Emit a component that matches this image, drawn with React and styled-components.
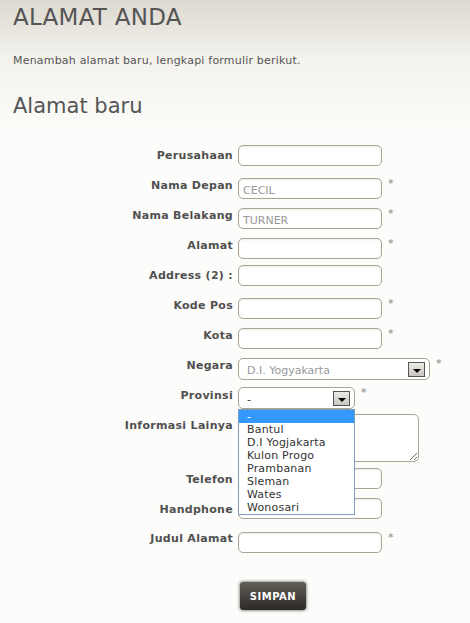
import React from 'react'
import styled, { createGlobalStyle } from 'styled-components'

const Global = createGlobalStyle`
  html, body { margin: 0; padding: 0; }
  body {
    background: #fcfcfa;
    font-family: "DejaVu Sans", Verdana, sans-serif;
    color: #555;
  }
`

const Page = styled.div`
  min-height: 623px;
  padding: 0 13px;
  background: linear-gradient(to bottom, #dcd9cf 0, #f3f2ed 60px, #fcfcfa 130px, #fcfcfa 100%);
  overflow: hidden;
`

const Title = styled.h1`
  margin: 3px 0 0;
  font-size: 23px;
  line-height: 28px;
  font-weight: normal;
  letter-spacing: 0.25px;
  color: #555;
`

const Intro = styled.p`
  margin: 23px 0 0;
  font-size: 11px;
  line-height: 14px;
  letter-spacing: 0.2px;
  color: #555;
`

const SubTitle = styled.h2`
  margin: 25px 0 0;
  font-size: 21px;
  line-height: 26px;
  font-weight: normal;
  color: #555;
`

const Form = styled.div`
  margin-top: 26px;
  display: grid;
  grid-template-columns: 220px 1fr;
  column-gap: 5px;
`

const Label = styled.label`
  grid-column: 1;
  text-align: right;
  font-size: 11px;
  line-height: 13px;
  font-weight: bold;
  letter-spacing: 0.3px;
  color: #505050;
  margin-top: ${p => p.$mt}px;
  padding-top: ${p => p.$lt}px;
`

const Field = styled.div`
  grid-column: 2;
  display: flex;
  align-items: flex-start;
  margin-top: ${p => p.$mt}px;
`

const Input = styled.input`
  box-sizing: border-box;
  width: 144px;
  height: 21px;
  margin: 0;
  padding: 3px 4px 0;
  border: 1px solid #aaa495;
  border-radius: 5px;
  background: #fff;
  box-shadow: inset 0 1px 2px rgba(0, 0, 0, 0.08);
  font-family: "DejaVu Sans", Verdana, sans-serif;
  font-size: 11px;
  color: #999;
  outline: none;
`

const TextArea = styled.textarea`
  box-sizing: border-box;
  width: 181px;
  height: 48px;
  margin: 0;
  padding: 3px 4px;
  border: 1px solid #aaa495;
  border-radius: 5px;
  background: #fff;
  font-family: "DejaVu Sans", Verdana, sans-serif;
  font-size: 11px;
  resize: both;
  outline: none;
`

const SelectBox = styled.div`
  position: relative;
  box-sizing: border-box;
  width: ${p => p.$w}px;
  height: 22px;
  border: 1px solid #aaa495;
  border-radius: 5px;
  background: #fff;
  display: flex;
  align-items: center;
  padding: 2px 0 0 8px;
  font-size: 11px;
  color: ${p => (p.$muted ? '#999' : '#333')};
`

const Arrow = styled.span`
  position: absolute;
  right: 4px;
  top: 3px;
  box-sizing: border-box;
  width: 17px;
  height: 15px;
  border: 1px solid #555;
  background: linear-gradient(#ecebe6, #c9c6bf);
  display: flex;
  align-items: center;
  justify-content: center;
  padding-top: 3px;

  &::after {
    content: '';
    border-left: 4px solid transparent;
    border-right: 4px solid transparent;
    border-top: 4px solid #000;
  }
`

const Star = styled.span`
  margin-left: 6px;
  font-size: 11px;
  line-height: 12px;
  color: #888;
`

const List = styled.ul`
  position: absolute;
  left: -1px;
  top: 21px;
  box-sizing: border-box;
  width: 117px;
  margin: 0;
  padding: 0;
  list-style: none;
  border: 1px solid #7f9db9;
  background: #fff;
  z-index: 2;
`

const Option = styled.li`
  height: 13px;
  line-height: 13px;
  padding-left: 8px;
  font-size: 11px;
  letter-spacing: 0.2px;
  color: ${p => (p.$active ? '#fff' : '#333')};
  background: ${p => (p.$active ? '#3399ff' : 'transparent')};
`

const Button = styled.button`
  grid-column: 2;
  justify-self: start;
  margin: 28px 0 0 1px;
  width: 68px;
  height: 30px;
  border: 1px solid #b8b6b2;
  border-radius: 4px;
  background: linear-gradient(#625e58, #2c2925);
  box-shadow: 0 0 3px rgba(0, 0, 0, 0.35);
  color: #fff;
  font-family: "DejaVu Sans", Verdana, sans-serif;
  font-size: 10px;
  font-weight: bold;
  letter-spacing: 0.5px;
`

const provinces = ['-', 'Bantul', 'D.I Yogjakarta', 'Kulon Progo', 'Prambanan', 'Sleman', 'Wates', 'Wonosari']

const rows = [
  { label: 'Perusahaan', mt: 0, lt: 4 },
  { label: 'Nama Depan', value: 'CECIL', req: true, mt: 12, lt: 1 },
  { label: 'Nama Belakang', value: 'TURNER', req: true, mt: 9, lt: 1 },
  { label: 'Alamat', req: true, mt: 9, lt: 1 },
  { label: 'Address (2) :', mt: 6, lt: 4 },
  { label: 'Kode Pos', req: true, mt: 12, lt: 1 },
  { label: 'Kota', req: true, mt: 9, lt: 1 },
  { label: 'Negara', type: 'select', w: 192, value: 'D.I. Yogyakarta', muted: true, req: true, mt: 9, lt: 1 },
  { label: 'Provinsi', type: 'select', w: 117, value: '-', open: true, req: true, mt: 7, lt: 2 },
  { label: 'Informasi Lainya', type: 'area', mt: 5, lt: 5 },
  { label: 'Telefon', mt: 6, lt: 5 },
  { label: 'Handphone', mt: 9, lt: 5 },
  { label: 'Judul Alamat', req: true, mt: 13, lt: 0 },
]

function Control({ row }) {
  if (row.type === 'select') {
    return (
      <SelectBox $w={row.w} $muted={row.muted}>
        {row.value}
        <Arrow />
        {row.open && (
          <List>
            {provinces.map((p, i) => (
              <Option key={p} $active={i === 0}>{p}</Option>
            ))}
          </List>
        )}
      </SelectBox>
    )
  }
  if (row.type === 'area') return <TextArea />
  return <Input readOnly value={row.value || ''} />
}

export default function App() {
  return (
    <Page>
      <Global />
      <Title>ALAMAT ANDA</Title>
      <Intro>Menambah alamat baru, lengkapi formulir berikut.</Intro>
      <SubTitle>Alamat baru</SubTitle>
      <Form>
        {rows.map(row => (
          <React.Fragment key={row.label}>
            <Label $mt={row.mt} $lt={row.lt}>{row.label}</Label>
            <Field $mt={row.mt}>
              <Control row={row} />
              {row.req && <Star>*</Star>}
            </Field>
          </React.Fragment>
        ))}
        <Button>SIMPAN</Button>
      </Form>
    </Page>
  )
}
